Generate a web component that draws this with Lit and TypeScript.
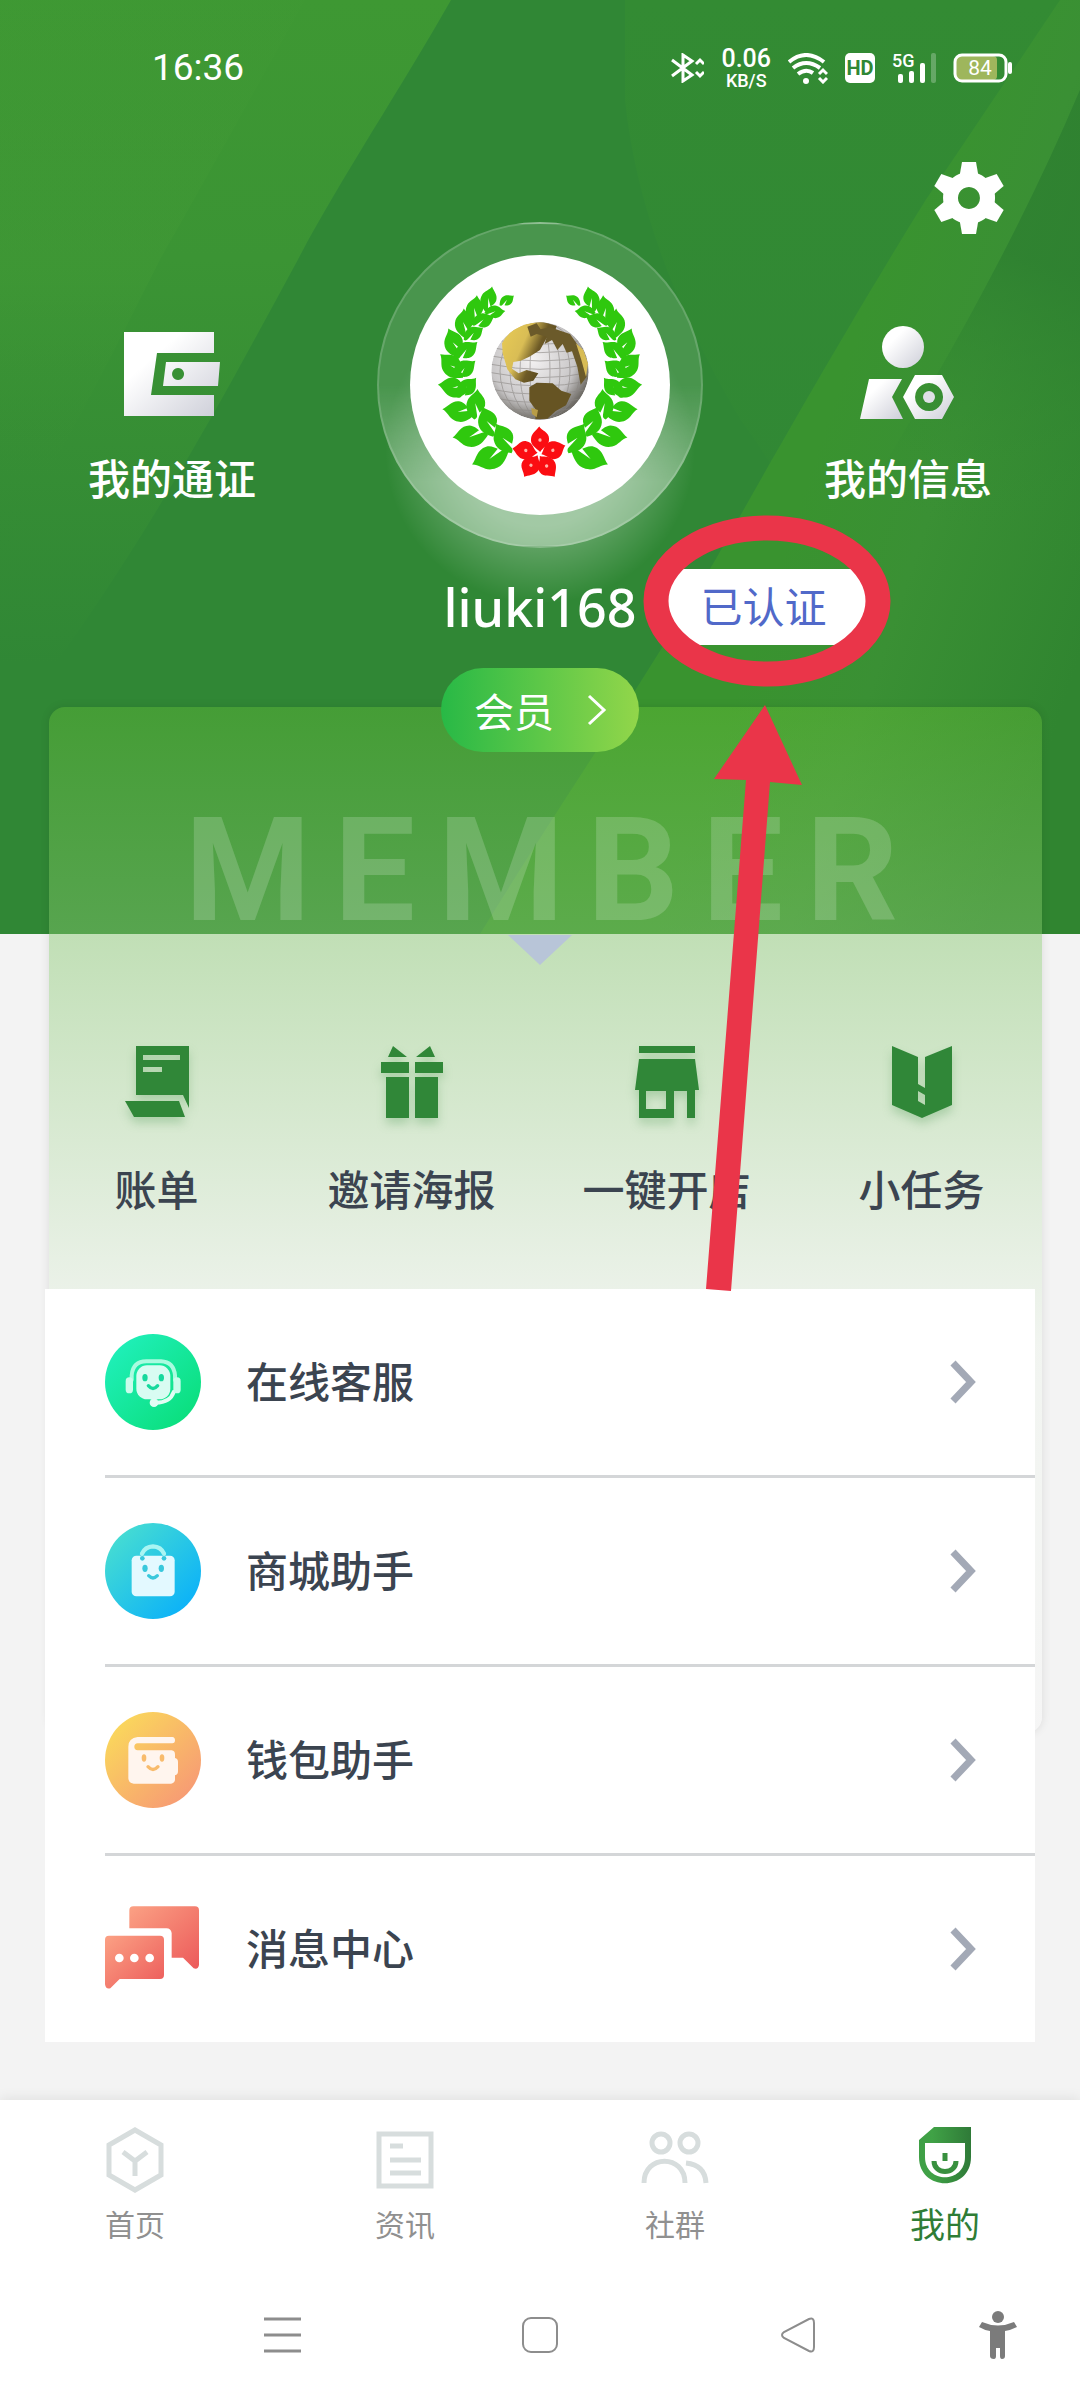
import { LitElement, html, svg, css, TemplateResult } from "lit";
import { customElement } from "lit/decorators.js";
import { classMap } from "lit/directives/class-map.js";

type Leaf = [x: number, y: number, angle: number, length: number];

const LEAVES: Leaf[] = [
  [410, 272, -22, 50],
  [356, 268, -62, 74],
  [314, 298, -68, 80],
  [282, 340, -78, 84],
  [252, 400, -98, 90],
  [246, 468, -122, 94],
  [252, 532, -158, 92],
  [268, 604, -160, 96],
  [302, 678, -172, 102],
  [362, 742, 172, 112],
  [374, 306, 8, 60],
  [338, 332, -8, 70],
  [310, 372, -20, 66],
  [288, 422, -24, 80],
  [282, 478, -24, 80],
  [290, 534, -34, 78],
  [318, 584, -72, 88],
  [354, 636, -98, 92],
  [402, 686, -106, 96],
];

const PETALS = [-86, -14, 60, 128, 196];

const leaf = ([x, y, angle, length]: Leaf) => svg`
  <path transform="translate(${x} ${y}) rotate(${angle}) scale(${length / 100})"
    d="M-50 10C-38-16-24-34 4-32C24-30 34-14 52-12C38 2 34 26 8 30C-6 31-14 24-22 20L4-4L-32 14C-38 18-46 16-50 10Z"/>`;

const emblem = html`
  <svg class="emblem" viewBox="0 0 1020 1050" role="img" aria-label="头像">
    <defs>
      <radialGradient id="globe" cx=".42" cy=".38" r=".62">
        <stop offset="0" stop-color="#f4f2f2" />
        <stop offset=".7" stop-color="#c9c7c8" />
        <stop offset="1" stop-color="#6f6c66" />
      </radialGradient>
      <linearGradient id="gold" x1="0" x2="1" y2=".5">
        <stop offset="0" stop-color="#e9cc55" />
        <stop offset=".45" stop-color="#d9bd55" />
        <stop offset=".7" stop-color="#6d5a26" />
        <stop offset="1" stop-color="#54451c" />
      </linearGradient>
      <clipPath id="disc"><circle cx="510" cy="483" r="146" /></clipPath>
    </defs>
    <g fill="#2fc80e">
      ${LEAVES.map(leaf)}
      <g transform="translate(1020 0) scale(-1 1)">${LEAVES.map(leaf)}</g>
    </g>
    <g clip-path="url(#disc)">
      <circle cx="510" cy="483" r="146" fill="url(#globe)" />
      <g fill="none" stroke="#8a8683" stroke-width="3" opacity=".6">
        ${[30, 60, 90, 120].map((r) => svg`<ellipse cx="510" cy="483" rx=${r} ry="146" />`)}
        ${[-90, -65, -40, -15, 10, 35, 60, 85, 110].map(
          (d) => svg`<path d="M364 ${478 + d}Q510 ${508 + d} 656 ${478 + d}" />`,
        )}
      </g>
      <path fill="url(#gold)" d="M396 400Q430 335 520 336L560 348L552 372L530 384L510 420L478 440L452 452L430 456L426 476L446 490L470 480L505 490L490 512L462 518L436 508L412 478L398 430Z" />
      <path fill="#6b5a2a" d="M472 350L500 340L512 358L540 352L600 372L634 420L650 500L632 524L622 470L606 424L590 428L578 402L562 420L546 390L524 402L530 380L500 372L482 380Z" />
      <path fill="#d8bc55" d="M618 400L640 420L654 460L648 500L634 450Z" />
      <path fill="#665423" d="M478 532L500 518L548 520L574 542L604 552L588 586L556 604L532 626L496 628L498 600L478 572Z" />
      <path fill="#b99d47" d="M484 594L504 600L500 622L486 612Z" />
    </g>
    <g fill="#fb0d12">
      ${PETALS.map(
        (a) => svg`
        <g transform="translate(508 732) rotate(${a})">
          <path d="M6 2C18-10 22-30 46-28C62-26 70-14 82-6C70 2 68 24 48 26C26 28 24 10 6 2Z" />
          <circle cx="42" cy="-1" r="5" fill="#ffb3a8" />
        </g>`,
      )}
    </g>
  </svg>
`;

const silver = (id: string) => svg`
  <linearGradient id=${id} x1="0" y1="0" x2="1" y2="1">
    <stop offset=".3" stop-color="#fff" />
    <stop offset="1" stop-color="#cdced8" />
  </linearGradient>`;

const walletIcon = html`
  <svg width="96" height="96" viewBox="0 0 96 96" aria-hidden="true">
    <defs>${silver("s1")}</defs>
    <path fill="url(#s1)" fill-rule="evenodd" d="M0 6H90V27H33L27 69H90V90H0Z M42 36H96L94 60H39Z M54 42a6 6 0 1 0 .1 0Z" />
  </svg>
`;

const infoIcon = html`
  <svg width="96" height="96" viewBox="0 0 96 96" aria-hidden="true">
    <defs>${silver("s2")}</defs>
    <circle cx="43" cy="21" r="21" fill="url(#s2)" />
    <path fill="url(#s2)" d="M9 53H42L32 71L43 93H0Z" />
    <path fill="url(#s2)" fill-rule="evenodd" d="M55 49H82L94 71L82 93H55L43 71Z M69 57a14 14 0 1 0 .1 0Z" />
    <circle cx="69" cy="71" r="6" fill="#dfe0e6" />
  </svg>
`;

const gearIcon = html`
  <svg width="70" height="72" viewBox="0 0 70 72" aria-hidden="true">
    <g fill="#fff">
      <path fill-rule="evenodd" d="M35 10a26 26 0 1 0 .1 0Z M35 25a11 11 0 1 1-.1 0Z" />
      ${[0, 60, 120, 180, 240, 300].map(
        (a) => svg`<path transform="rotate(${a} 35 36)" d="M28 0H42L45 17H25Z" />`,
      )}
    </g>
  </svg>
`;

const billIcon = html`
  <svg width="64" height="72" viewBox="0 0 64 72" aria-hidden="true">
    <path fill-rule="evenodd" d="M11 0H64V62L58 49H11Z M18 9V14H55V9Z M18 21V26H37V21Z" />
    <path d="M0 55H54L60 71H9Z" />
  </svg>
`;

const giftIcon = html`
  <svg width="62" height="72" viewBox="0 0 62 72" aria-hidden="true">
    <path d="M12 0L26 11H7ZM49 0L54 11H35ZM0 16H28V27H0ZM34 16H62V27H34ZM5 31H28V72H5ZM34 31H57V72H34Z" />
  </svg>
`;

const shopIcon = html`
  <svg width="64" height="72" viewBox="0 0 64 72" aria-hidden="true">
    <path d="M4 0H60V7H4ZM4 13H60L64 44H0Z" />
    <path fill-rule="evenodd" d="M4 40H60V72H52V45H39V72H4Z M11 45V63H31V45Z" />
  </svg>
`;

const taskIcon = html`
  <svg width="60" height="72" viewBox="0 0 60 72" aria-hidden="true">
    <path fill-rule="evenodd" d="M0 0L26 11V38L33 42V11L60 0V59L30 72L0 59Z M26 45V55L33 59V49Z" />
  </svg>
`;

const badgeIcon = (id: string, from: string, to: string, art: TemplateResult) => html`
  <svg width="96" height="96" viewBox="0 0 288 288" aria-hidden="true">
    <defs>
      <linearGradient id=${id} x1=".1" y1=".15" x2=".85" y2=".9">
        <stop offset="0" stop-color=${from} />
        <stop offset="1" stop-color=${to} />
      </linearGradient>
    </defs>
    <circle cx="144" cy="144" r="144" fill="url(#${id})" />
    ${art}
  </svg>
`;

const serviceIcon = badgeIcon("g1", "#1fefb8", "#0bdf7e", svg`
  <g fill="none" stroke="#a9fbe0" stroke-width="12" stroke-linecap="round">
    <path d="M80 138V124Q84 82 124 82H168Q206 84 210 124V138" />
    <path stroke="#e3fdf4" d="M206 174Q196 206 152 206" />
  </g>
  <rect x="62" y="130" width="22" height="48" rx="11" fill="#c9fcec" />
  <rect x="205" y="130" width="22" height="48" rx="11" fill="#c9fcec" />
  <circle cx="147" cy="206" r="13" fill="#e3fdf4" />
  <rect x="94" y="94" width="102" height="102" rx="32" fill="#d8fcf2" />
  <g fill="#16d99d"><ellipse cx="120" cy="131" rx="8" ry="11" /><ellipse cx="169" cy="131" rx="8" ry="11" /></g>
  <path d="M130 155Q144 172 158 155" fill="none" stroke="#16d99d" stroke-width="10" stroke-linecap="round" />
`);

const mallIcon = badgeIcon("g2", "#45dcd3", "#0cb2f8", svg`
  <rect x="80" y="98" width="129" height="122" rx="14" fill="#e3f9ff" />
  <path d="M111 92Q120 71 144 70Q168 71 177 92" fill="none" stroke="#a9f5f3" stroke-width="13" stroke-linecap="round" />
  <g fill="#39c8dc"><circle cx="112" cy="106" r="7" /><circle cx="177" cy="106" r="7" />
    <ellipse cx="120" cy="136" rx="8" ry="11" /><ellipse cx="169" cy="136" rx="8" ry="11" /></g>
  <path d="M131 158Q144 172 157 158" fill="none" stroke="#39c8dc" stroke-width="10" stroke-linecap="round" />
`);

const purseIcon = badgeIcon("g3", "#fad75c", "#f79b74", svg`
  <path fill="#fff5ee" d="M98 75H202Q210 76 210 85Q210 94 202 94H98Q88 95 88 104Q88 114 98 115H200Q210 116 210 128V138Q219 140 219 150V178Q219 188 210 190V204Q208 214 198 215H86Q70 213 70 198V104Q70 78 98 75Z" />
  <g fill="#f8bb6c"><ellipse cx="117" cy="138" rx="7" ry="11" /><ellipse cx="171" cy="138" rx="7" ry="11" /></g>
  <path d="M129 164Q144 181 159 164" fill="none" stroke="#f8bb6c" stroke-width="10" stroke-linecap="round" />
`);

const messageIcon = html`
  <svg width="96" height="96" viewBox="0 0 288 288" aria-hidden="true">
    <defs>
      <linearGradient id="g4" x1="0" y1="0" x2="1" y2="1">
        <stop offset="0" stop-color="#fba184" />
        <stop offset="1" stop-color="#ec5a5a" />
      </linearGradient>
    </defs>
    <path fill="url(#g4)" d="M85 16H270Q282 16 282 28V192Q280 206 266 202L234 170H200V96Q198 82 184 82H73V28Q73 16 85 16Z" />
    <path fill="url(#g4)" d="M12 104H165Q177 104 177 116V222Q177 234 165 234H44L16 262Q2 266 0 250V116Q0 104 12 104Z" />
    <g fill="#fff"><circle cx="43" cy="171" r="13" /><circle cx="88" cy="171" r="13" /><circle cx="134" cy="171" r="13" /></g>
  </svg>
`;

const homeTab = html`
  <svg width="58" height="66" viewBox="0 0 58 66" fill="none" stroke="#d7dddd" stroke-width="5" aria-hidden="true">
    <path d="M29 3L55 18V48L29 63L3 48V18Z" />
    <path d="M17 25L29 34L41 25M29 34V49" />
  </svg>
`;

const newsTab = html`
  <svg width="58" height="66" viewBox="0 0 58 66" fill="none" stroke="#d7dddd" stroke-width="5" aria-hidden="true">
    <path d="M3 7H55V59H3Z" />
    <path d="M14 19H27M14 33H45M14 46H45" />
  </svg>
`;

const groupTab = html`
  <svg width="68" height="66" viewBox="0 0 68 66" fill="none" stroke="#d7dddd" stroke-width="5" aria-hidden="true">
    <circle cx="20" cy="16" r="9" />
    <circle cx="48" cy="16" r="9" />
    <path d="M3 56C3 27 44 27 44 56M45 36Q64 38 65 56" />
  </svg>
`;

const mineTab = html`
  <svg width="52" height="66" viewBox="0 0 52 66" aria-hidden="true">
    <defs>
      <linearGradient id="g5" x2="1">
        <stop offset="0" stop-color="#3f9f46" />
        <stop offset=".25" stop-color="#40a246" />
        <stop offset="1" stop-color="#2f7a38" />
      </linearGradient>
    </defs>
    <path fill="url(#g5)" fill-rule="evenodd" d="M15 0H52V30C52 65 0 65 0 30V13Z M6 16V30C6 57 46 57 46 30V16Z" />
    <path fill="none" stroke="#38903f" stroke-width="5" d="M15 34C15 48 37 48 37 34M26 26V34" />
  </svg>
`;

@customElement("app-root")
export class AppRoot extends LitElement {
  static styles = css`
    :host {
      display: block;
      font-family: "Noto Sans", "Noto Sans CJK SC", sans-serif;
      color: #3b4450;
      background: #f3f3f3;
    }
    * { box-sizing: border-box; }
    svg { display: block; flex: none; }
    button {
      border: 0;
      padding: 0;
      background: none;
      color: inherit;
      font: inherit;
      cursor: pointer;
    }
    a { color: inherit; text-decoration: none; }
    .page { position: relative; overflow: hidden; }
    .hero { position: relative; color: #fff; padding-bottom: 289px; background: #308735; }
    .backdrop { position: absolute; inset: 0; width: 100%; height: 100%; }
    .status, .toolbar, .profile, .identity { position: relative; }
    .status {
      display: flex;
      align-items: center;
      justify-content: space-between;
      height: 136px;
      padding: 0 68px 0 152px;
      font-family: Roboto, sans-serif;
    }
    .clock { font-size: 37px; line-height: 44px; }
    .signals { display: flex; align-items: center; gap: 17px; }
    .rate { display: flex; flex-direction: column; align-items: center; font-weight: 500; font-size: 25px; line-height: 26px; }
    .unit { font-size: 18px; line-height: 18px; }
    .hd {
      width: 30px;
      border-radius: 5px;
      background: #fff;
      color: #308735;
      font-size: 20px;
      font-weight: 700;
      line-height: 30px;
      text-align: center;
    }
    .cell { display: flex; flex-direction: column; width: 44px; }
    .toolbar { display: flex; justify-content: flex-end; padding: 26px 76px 0; height: 86px; }
    .toolbar button { height: 72px; }
    .profile { display: grid; grid-template-columns: 1fr 392px 1fr; justify-items: center; }
    .shortcut {
      display: flex;
      flex-direction: column;
      align-items: center;
      gap: 27px;
      padding-top: 104px;
      font-size: 42px;
      font-weight: 500;
      line-height: 60px;
    }
    .avatar {
      display: grid;
      place-items: center;
      width: 326px;
      height: 326px;
      border: 2px solid rgba(255, 255, 255, 0.16);
      border-radius: 50%;
      background: linear-gradient(rgba(255, 255, 255, 0.12) 50%, rgba(255, 255, 255, 0.36) 80%);
    }
    .portrait { width: 260px; height: 260px; overflow: hidden; border-radius: 50%; background: #fff; }
    .emblem { width: 340px; margin: -45px 0 0 -40px; }
    .identity {
      display: grid;
      grid-template-columns: 1fr auto 1fr;
      align-items: center;
      margin-top: 21px;
    }
    .name { grid-column: 2; margin: 0; font-size: 52px; font-weight: 500; line-height: 76px; }
    .verified {
      justify-self: start;
      margin-left: 22px;
      padding: 0 42px;
      border-radius: 14px;
      background: #fff;
      color: #5169c9;
      font-size: 42px;
      line-height: 76px;
    }
    .card {
      position: relative;
      margin: -227px 38px 0 49px;
      padding: 0 11px 513px 0;
      border-radius: 16px;
      background: linear-gradient(
        rgba(118, 208, 56, 0.3),
        rgba(134, 200, 110, 0.46) 229px,
        rgba(240, 246, 238, 0.5) 640px,
        rgba(248, 248, 248, 0.5)
      );
      box-shadow: 0 0 10px rgba(0, 0, 0, 0.1);
      display: flex;
      flex-direction: column;
    }
    .member {
      align-self: center;
      display: flex;
      align-items: center;
      gap: 33px;
      height: 84px;
      margin-top: -39px;
      padding: 0 32px 0 33px;
      border-radius: 42px;
      background: linear-gradient(90deg, #28b946, #92d64a);
      color: #fff;
      font-size: 40px;
    }
    .watermark {
      margin: 47px 0 0 26px;
      text-align: center;
      font: 700 144px/144px Roboto, sans-serif;
      letter-spacing: 23px;
      color: rgba(255, 255, 255, 0.18);
    }
    .caret {
      align-self: center;
      width: 64px;
      height: 30px;
      margin-top: -8px;
      background: #b8c5d8;
      clip-path: polygon(0 0, 100% 0, 50% 100%);
    }
    .actions {
      display: grid;
      grid-template-columns: repeat(4, 1fr);
      margin: 81px -18px 0 -20px;
    }
    .action {
      display: flex;
      flex-direction: column;
      align-items: center;
      gap: 42px;
      font-size: 42px;
      font-weight: 500;
      line-height: 60px;
    }
    .action svg { fill: #308738; filter: drop-shadow(0 6px 5px rgba(48, 135, 56, 0.25)); }
    .menu {
      position: relative;
      margin: -444px 45px 0;
      padding: 0 0 0 60px;
      list-style: none;
      background: #fff;
    }
    .item + .item { border-top: 3px solid #d4d6d8; }
    .entry {
      display: flex;
      align-items: center;
      gap: 45px;
      padding: 45px 59px 45px 0;
      font-size: 42px;
      font-weight: 500;
      line-height: 60px;
    }
    .chevron { margin-left: auto; }
    .bottom {
      position: relative;
      margin-top: 58px;
      background: #fff;
      box-shadow: 0 -2px 12px rgba(0, 0, 0, 0.08);
    }
    .tabs { display: grid; grid-template-columns: repeat(4, 1fr); padding: 27px 0 21px; }
    .tab {
      display: flex;
      flex-direction: column;
      align-items: center;
      gap: 10px;
      color: #909090;
      font-size: 30px;
      line-height: 44px;
    }
    .current { color: #2f7d36; font-size: 35px; }
    .system {
      display: grid;
      grid-template-columns: 258fr 258fr 258fr 142fr;
      place-items: center;
      height: 133px;
      padding: 0 11px 0 153px;
    }
    .marks { position: absolute; top: 515px; left: 50%; margin-left: 101px; pointer-events: none; }
  `;

  private shortcut(icon: TemplateResult, label: string) {
    return html`<button class="shortcut">${icon}<span>${label}</span></button>`;
  }

  private action(icon: TemplateResult, label: string) {
    return html`<button class="action">${icon}<span>${label}</span></button>`;
  }

  private entry(icon: TemplateResult, label: string) {
    return html`
      <li class="item">
        <a class="entry" href="#">
          ${icon}<span>${label}</span>
          <svg class="chevron" width="26" height="44" viewBox="0 0 26 44" fill="none" stroke="#a3a9b6" stroke-width="7" aria-hidden="true">
            <path d="M3 3L21 22L3 41" />
          </svg>
        </a>
      </li>
    `;
  }

  private tab(icon: TemplateResult, label: string, current = false) {
    return html`
      <a class=${classMap({ tab: true, current })} href="#">${icon}<span>${label}</span></a>
    `;
  }

  private backdrop() {
    return html`
      <svg class="backdrop" viewBox="0 0 1080 936" preserveAspectRatio="none" aria-hidden="true">
        <defs>
          <linearGradient id="b1" x1="0" y1="0" x2="0" y2="1">
            <stop offset="0" stop-color="#3e9833" />
            <stop offset=".35" stop-color="#3b9434" />
            <stop offset=".9" stop-color="#308735" />
          </linearGradient>
          <linearGradient id="b6" x1="0" y1="0" x2="0" y2="1">
            <stop offset="0" stop-color="#449c36" stop-opacity=".1" />
            <stop offset=".5" stop-color="#449c36" stop-opacity=".35" />
            <stop offset="1" stop-color="#308735" stop-opacity="0" />
          </linearGradient>
          <linearGradient id="b2" x1="0" y1="0" x2="0" y2="1">
            <stop offset="0" stop-color="#338b33" />
            <stop offset=".7" stop-color="#308735" />
          </linearGradient>
          <linearGradient id="b3" gradientUnits="userSpaceOnUse" x1="780" y1="560" x2="1080" y2="660">
            <stop offset="0" stop-color="#39932f" />
            <stop offset=".4" stop-color="#3a9034" />
            <stop offset="1" stop-color="#308530" />
          </linearGradient>
          <linearGradient id="b4" gradientUnits="userSpaceOnUse" x1="980" y1="240" x2="880" y2="500">
            <stop offset="0" stop-color="#2d7f30" stop-opacity=".8" />
            <stop offset="1" stop-color="#348c32" stop-opacity="0" />
          </linearGradient>
          <radialGradient id="b5" gradientUnits="userSpaceOnUse" cx="540" cy="450" r="155">
            <stop offset=".5" stop-color="#fff" stop-opacity=".3" />
            <stop offset="1" stop-color="#fff" stop-opacity="0" />
          </radialGradient>
        </defs>
        <path fill="url(#b1)" d="M0 0H451C400 90 340 180 298 260C230 385 140 560 0 740Z" />
        <path fill="url(#b6)" d="M0 0H305C250 100 200 190 160 260C120 340 60 460 0 560Z" />
        <path fill="url(#b2)" d="M625 0H1080V936H900Q900 640 740 420Q640 250 625 100Z" />
        <path fill="url(#b3)" d="M1060 0H1080V936H480C560 805 640 690 716 560C800 410 870 290 926 200Q1000 90 1060 0Z" />
        <path fill="url(#b4)" d="M1080 90V640H780C900 440 1000 280 1080 90Z" />
        <circle cx="540" cy="450" r="155" fill="url(#b5)" />
      </svg>
    `;
  }

  private signals() {
    return html`
      <div class="signals">
        <svg width="33" height="30" viewBox="0 0 33 30" fill="none" stroke="#fff" stroke-width="3" aria-hidden="true">
          <path d="M1 7L21 22L12 28V2L21 8L1 23" />
          <path d="M25 11L29 7L33 11M25 19L29 23L33 19" />
        </svg>
        <div class="rate"><span>0.06</span><span class="unit">KB/S</span></div>
        <svg width="40" height="31" viewBox="0 0 40 31" fill="none" stroke="#fff" stroke-width="4" aria-hidden="true">
          <path d="M1 9Q18 -5 36 9M5 15Q18 5 32 15M10 21Q18 15 25 20" />
          <circle cx="18" cy="28" r="3" fill="#fff" stroke="none" />
          <path stroke-width="3" d="M31 21L35 17L39 21M31 25L35 29L39 25" />
        </svg>
        <span class="hd">HD</span>
        <svg width="44" height="40" viewBox="0 -5 44 40" fill="#fff" aria-label="5G">
          <text x="0" y="14" font-family="Roboto" font-size="18" font-weight="500">5G</text>
          <rect x="6" y="21" width="5" height="9" rx="2" />
          <rect x="17" y="18" width="5" height="12" rx="2" />
          <rect x="28" y="10" width="5" height="20" rx="2" />
          <rect x="39" y="0" width="5" height="30" rx="2" opacity=".25" />
        </svg>
        <svg width="59" height="30" viewBox="0 0 59 30" aria-label="84%">
          <rect x="3" y="3" width="41" height="24" rx="4" fill="#9eb65c" />
          <rect x="2" y="2" width="51" height="26" rx="7" fill="none" stroke="#fff" stroke-width="3" />
          <rect x="55" y="9" width="4" height="12" rx="2" fill="#fff" />
          <text x="27" y="22" fill="#fff" text-anchor="middle" font-family="Roboto" font-size="21">84</text>
        </svg>
      </div>
    `;
  }

  render() {
    return html`
      <div class="page">
        <header class="hero">
          ${this.backdrop()}
          <div class="status"><span class="clock">16:36</span>${this.signals()}</div>
          <div class="toolbar"><button aria-label="设置">${gearIcon}</button></div>
          <div class="profile">
            ${this.shortcut(walletIcon, "我的通证")}
            <div class="avatar"><div class="portrait">${emblem}</div></div>
            ${this.shortcut(infoIcon, "我的信息")}
          </div>
          <div class="identity">
            <h1 class="name">liuki168</h1>
            <span class="verified">已认证</span>
          </div>
        </header>

        <section class="card">
          <button class="member">
            <span>会员</span>
            <svg width="20" height="32" viewBox="0 0 20 32" fill="none" stroke="#fff" stroke-width="3" aria-hidden="true">
              <path d="M2 2L17 16L2 30" />
            </svg>
          </button>
          <div class="watermark">MEMBER</div>
          <div class="caret"></div>
          <div class="actions">
            ${this.action(billIcon, "账单")} ${this.action(giftIcon, "邀请海报")}
            ${this.action(shopIcon, "一键开店")} ${this.action(taskIcon, "小任务")}
          </div>
        </section>

        <ul class="menu">
          ${this.entry(serviceIcon, "在线客服")} ${this.entry(mallIcon, "商城助手")}
          ${this.entry(purseIcon, "钱包助手")} ${this.entry(messageIcon, "消息中心")}
        </ul>

        <footer class="bottom">
          <nav class="tabs">
            ${this.tab(homeTab, "首页")} ${this.tab(newsTab, "资讯")}
            ${this.tab(groupTab, "社群")} ${this.tab(mineTab, "我的", true)}
          </nav>
          <div class="system">
            <button aria-label="最近任务">
              <svg width="37" height="38" viewBox="0 0 37 38" stroke="#8d8d8d" stroke-width="3">
                <path d="M0 3H37M0 19H37M0 35H37" />
              </svg>
            </button>
            <button aria-label="主屏幕">
              <svg width="38" height="38" viewBox="0 0 38 38" fill="none" stroke="#8d8d8d" stroke-width="2">
                <rect x="2" y="2" width="34" height="34" rx="8" />
              </svg>
            </button>
            <button aria-label="返回">
              <svg width="36" height="36" viewBox="0 0 36 36" fill="none" stroke="#8d8d8d" stroke-width="2">
                <path d="M29 2Q34 0 34 6V30Q34 36 29 34L4 21Q0 18 4 15Z" />
              </svg>
            </button>
            <button aria-label="无障碍">
              <svg width="38" height="50" viewBox="0 0 38 50" fill="#7b7b7b">
                <circle cx="19" cy="7" r="6" />
                <path d="M3 12Q19 19 35 12L38 17Q32 20 26 21V46Q26 49 23 49Q21 49 21 46V38H17V46Q17 49 15 49Q11 49 11 46V21Q5 20 0 17Z" />
              </svg>
            </button>
          </div>
        </footer>

        <svg class="marks" width="252" height="780" viewBox="0 0 252 780" aria-hidden="true">
          <ellipse cx="126" cy="86" rx="111" ry="73" fill="none" stroke="#ea3549" stroke-width="25" />
          <path fill="#ea3549" d="M124 190L161 270L129 267L90 776L65 774L105 265L73 264Z" />
        </svg>
      </div>
    `;
  }
}
